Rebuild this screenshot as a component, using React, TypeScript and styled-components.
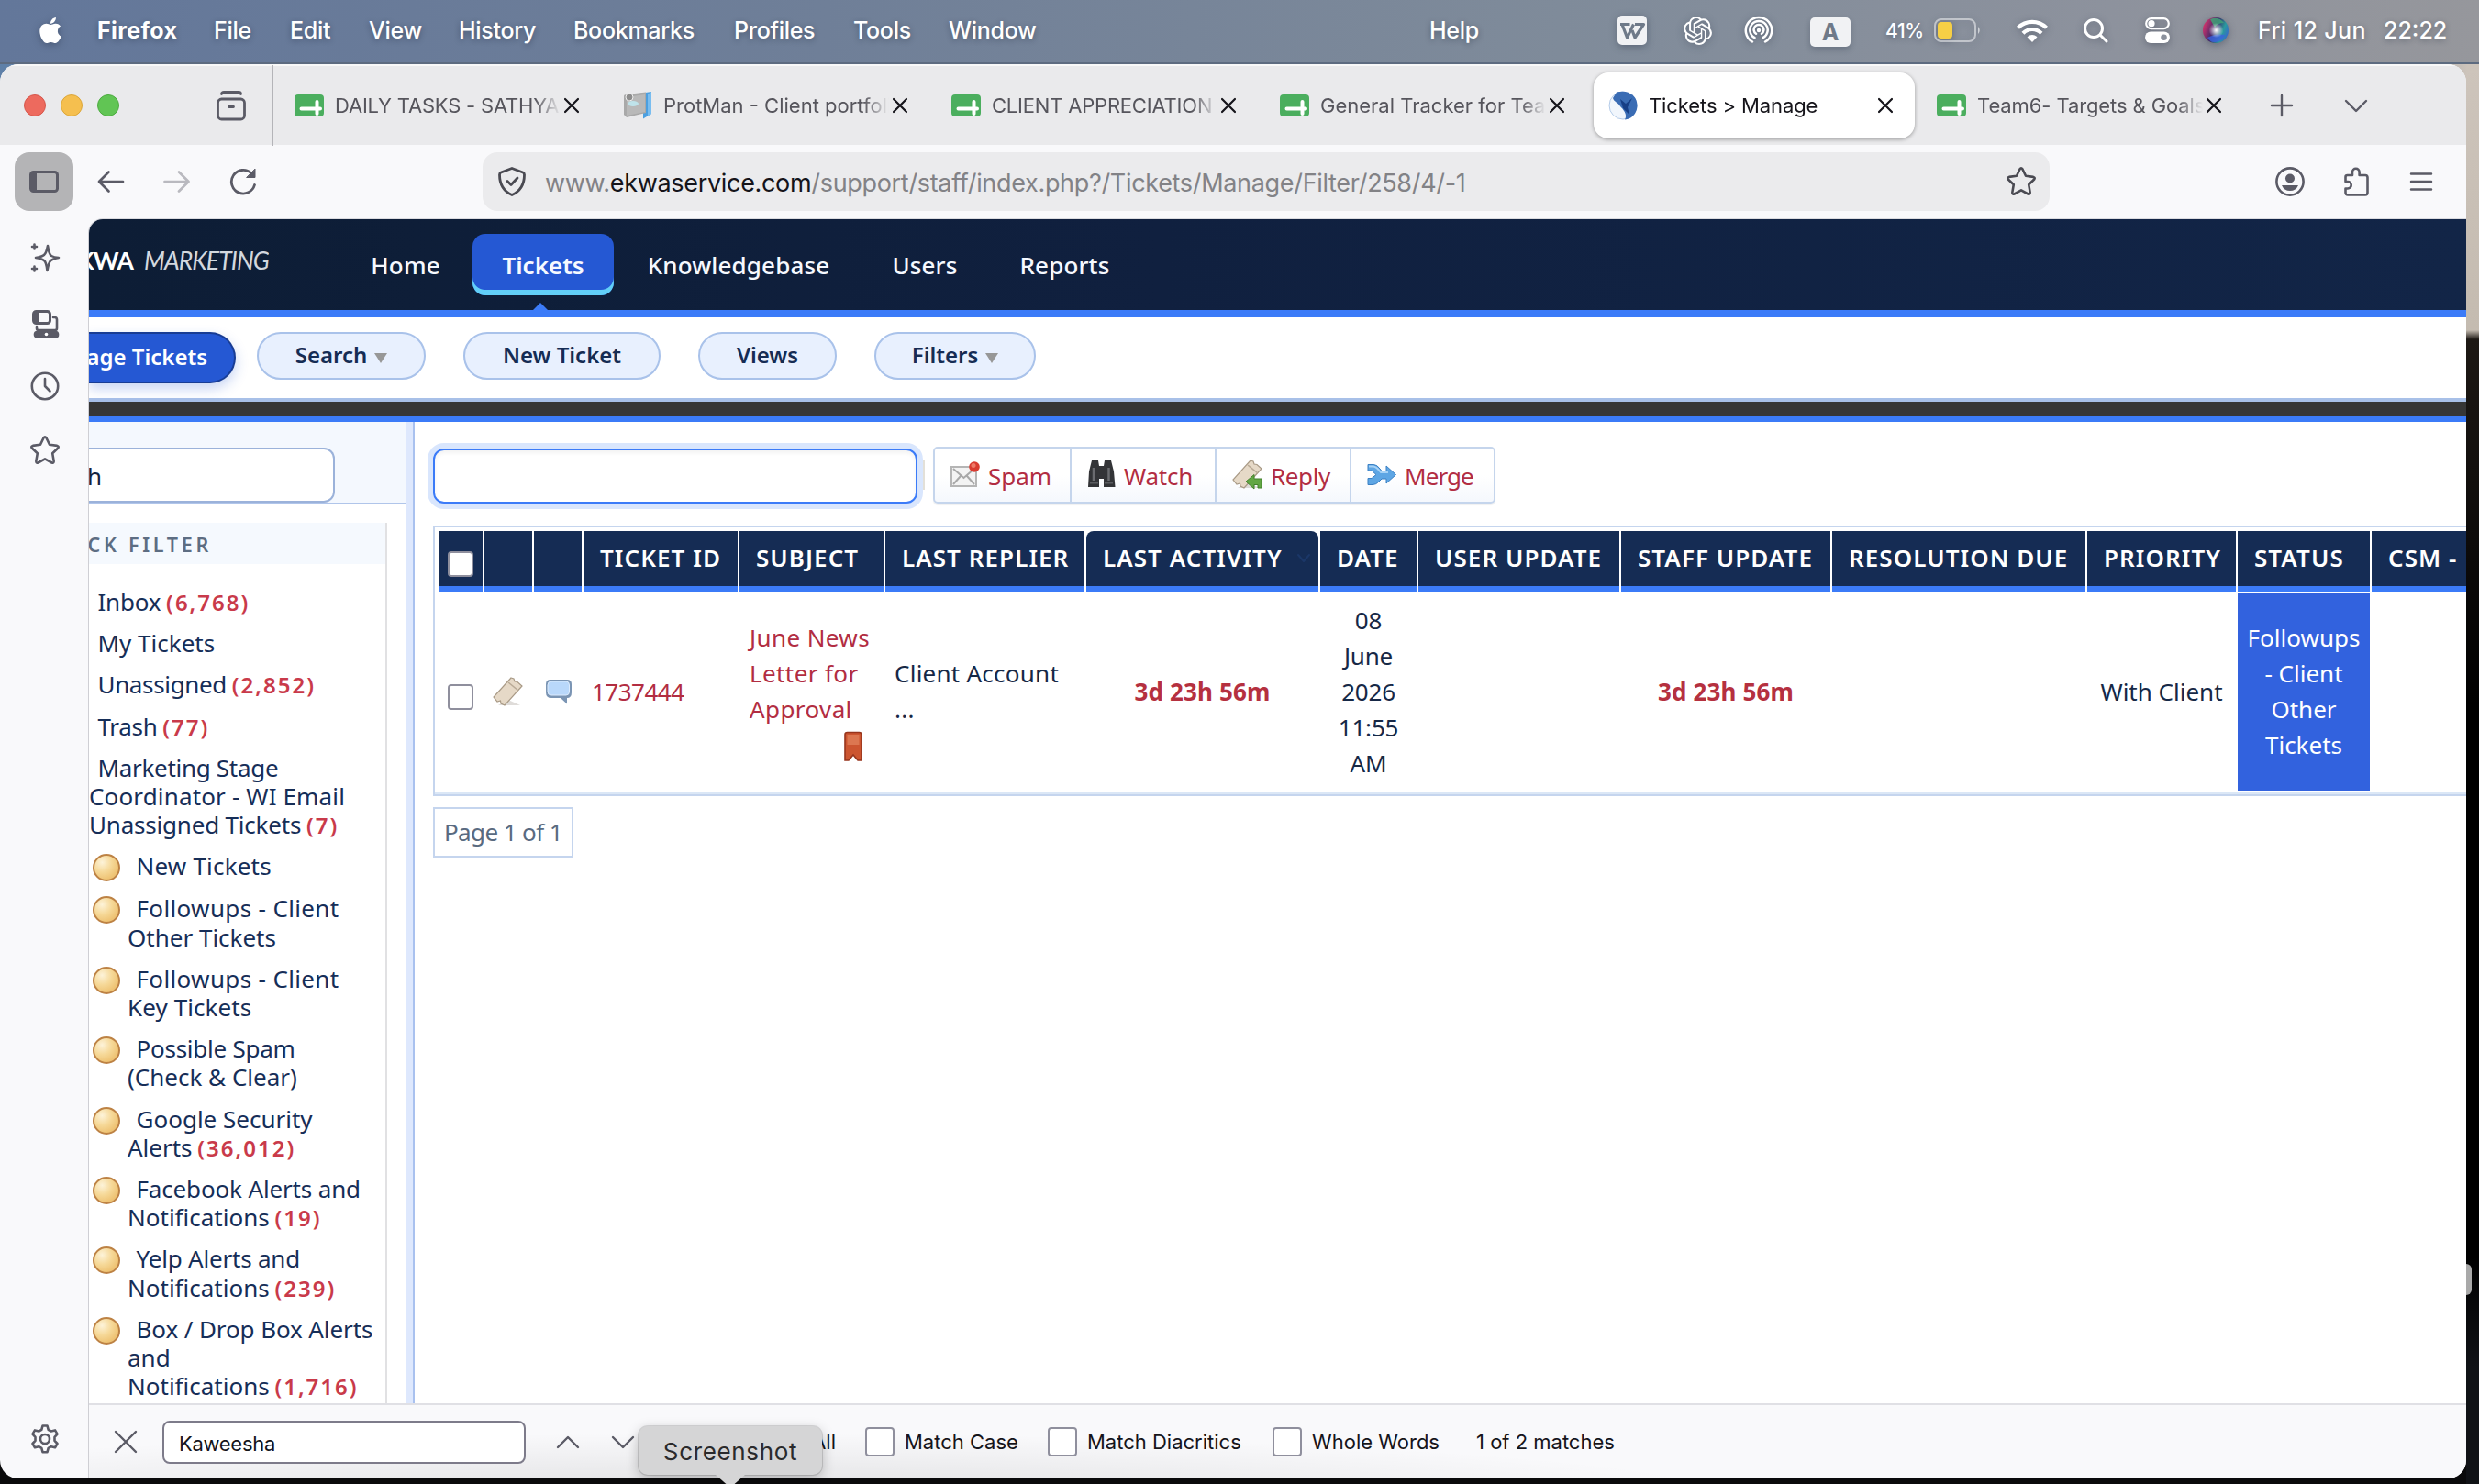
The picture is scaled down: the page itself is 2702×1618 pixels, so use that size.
import React from "react";
import styled, { createGlobalStyle, css } from "styled-components";
import { FaApple } from "react-icons/fa";
import { SiOpenai } from "react-icons/si";

const ui = `Inter, "Liberation Sans", sans-serif`;
const site = `"Noto Sans", "Open Sans", sans-serif`;

const Global = createGlobalStyle`
  *, *::before, *::after { box-sizing: border-box; }
  body { margin: 0; font-family: ${ui}; overflow: hidden; }
  svg { display: block; flex: none; overflow: visible; }
`;

/* ---------- desktop ---------- */

const Desktop = styled.div`
  position: relative;
  width: 2702px;
  height: 1618px;
  overflow: hidden;
  display: flex;
  flex-direction: column;
  background: linear-gradient(90deg, #5f80a8 0, #8e969f 2600px, #cdc4bb 2690px) 0 0 / 100% 120px no-repeat, #0a0a0b;
`;

const MenuBar = styled.header`
  height: 70px;
  flex: none;
  display: flex;
  align-items: flex-start;
  padding-left: 39px;
  background: linear-gradient(90deg, #63779a 0, #6f7f98 900px, #7f8b9a 1700px, #8d929d 2300px, #96979c 100%);
  border-bottom: 2px solid #5d6b80;
  color: #fff;
`;

const MenuItem = styled.div<{ $w: number; $bold?: boolean; $ls?: number; $size?: number }>`
  width: ${(p) => p.$w}px;
  height: 66px;
  flex: none;
  display: flex;
  align-items: center;
  white-space: nowrap;
  font-size: ${(p) => p.$size ?? 25}px;
  font-weight: ${(p) => (p.$bold ? 700 : 500)};
  letter-spacing: ${(p) => p.$ls ?? -0.3}px;
  text-shadow: 0 2px 6px rgba(20, 30, 50, 0.4);
  svg { filter: drop-shadow(0 2px 4px rgba(20, 30, 50, 0.35)); }
`;

const InputSource = styled.span<{ $w: number }>`
  width: ${(p) => p.$w}px;
  height: 32px;
  margin-top: 3px;
  border-radius: 5px;
  background: #f1f2f4;
  color: #6f7a89;
  display: flex;
  align-items: center;
  justify-content: center;
  font-weight: 700;
  font-size: 25px;
  text-shadow: none;
  box-shadow: 0 3px 6px rgba(20, 30, 50, 0.25);
`;

const Stage = styled.div`
  flex: 1;
  display: flex;
  min-height: 0;
`;

const Wallpaper = styled.div`
  width: 14px;
  display: flex;
  flex-direction: column;
  background: linear-gradient(#cdc4bb 0, #c4bbb0 290px, #1d1814 300px, #0d0b0a 520px, #000 700px, #000 1300px, #101216 1420px);
  padding-top: 1308px;
`;

const PeekingHandle = styled.div`
  width: 6px;
  height: 34px;
  background: #a9a9a9;
  border-radius: 0 6px 6px 0;
`;

/* ---------- browser chrome ---------- */

const Browser = styled.main`
  width: 2688px;
  height: 1542px;
  overflow: hidden;
  display: flex;
  flex-direction: column;
  border-radius: 20px;
  background: #f9f9fb;
`;

const TabStrip = styled.div`
  height: 88px;
  flex: none;
  display: flex;
  align-items: center;
  background: #eaeaec;
  border-top: 2px solid #f8f8f8;
`;

const Lights = styled.div`
  width: 236px;
  padding-left: 26px;
  display: flex;
  gap: 16px;
`;

const Light = styled.i<{ $c: string; $b: string }>`
  width: 24px;
  height: 24px;
  border-radius: 50%;
  background: ${(p) => p.$c};
  border: 1px solid ${(p) => p.$b};
`;

const TabDivider = styled.div`
  width: 2px;
  height: 88px;
  margin: 0 7px 0 28px;
  background: #b4b4b8;
`;

const Tab = styled.div<{ $active?: boolean }>`
  width: 350px;
  height: 72px;
  margin-right: 8px;
  padding-left: 16px;
  display: flex;
  align-items: center;
  gap: 12px;
  border-radius: 16px;
  color: ${(p) => (p.$active ? "#15141a" : "#56555c")};
  ${(p) =>
    p.$active &&
    css`
      background: #fff;
      box-shadow: 0 1px 4px rgba(0, 0, 0, 0.35);
    `}
`;

const TabTitle = styled.span<{ $ls?: number }>`
  width: 246px;
  margin-right: -8px;
  overflow: hidden;
  white-space: nowrap;
  font-size: 22px;
  line-height: 32px;
  letter-spacing: ${(p) => p.$ls ?? -0.1}px;
  mask-image: linear-gradient(90deg, #000 218px, transparent 246px);
`;

const TabEnd = styled.div`
  display: flex;
  align-items: center;
  gap: 57px;
  padding-left: 22px;
`;

const NavBar = styled.div`
  height: 80px;
  flex: none;
  display: flex;
  align-items: center;
  padding-left: 16px;
`;

const PanelToggle = styled.div`
  width: 64px;
  height: 64px;
  margin-right: 26px;
  border-radius: 16px;
  background: #b4b4b6;
  display: flex;
  align-items: center;
  justify-content: center;
`;

const NavIcon = styled.div<{ $w: number; $dim?: boolean }>`
  width: ${(p) => p.$w}px;
  opacity: ${(p) => (p.$dim ? 0.4 : 1)};
`;

const UrlBar = styled.div`
  width: 1708px;
  height: 64px;
  border-radius: 16px;
  background: #ebebed;
  display: flex;
  align-items: center;
  padding: 0 15px 0 16px;
`;

const Url = styled.span`
  flex: 1;
  padding: 2px 0 0 20px;
  font-size: 27px;
  letter-spacing: -0.32px;
  color: #828286;
  b { font-weight: 400; color: #15141a; }
`;

const NavEnd = styled.div`
  display: flex;
  align-items: center;
  gap: 42px;
  margin-left: 246px;
`;

const Main = styled.div`
  flex: 1;
  display: flex;
  min-height: 0;
`;

const Rail = styled.nav`
  width: 96px;
  flex: none;
  display: flex;
  flex-direction: column;
  align-items: center;
  padding: 27px 0 27px 1px;
`;

const RailIcon = styled.div<{ $h: number }>`
  height: ${(p) => p.$h}px;
`;

const RailSpacer = styled.div`
  flex: 1;
`;

const Frame = styled.div`
  flex: 1;
  min-width: 0;
  display: flex;
  flex-direction: column;
  overflow: hidden;
  border-left: 1px solid #cfcfd4;
  border-top: 1px solid #dcdce0;
  border-top-left-radius: 16px;
`;

/* ---------- site ---------- */

const Page = styled.div`
  height: 1291px;
  flex: none;
  overflow: hidden;
  background: #fff;
  font-family: ${site};
`;

const SiteHeader = styled.div`
  height: 107px;
  border-bottom: 8px solid #3b7bf8;
  background: linear-gradient(90deg, #0d1d35, #10203f 45%, #122547);
  display: flex;
  align-items: flex-start;
  padding-top: 16px;
`;

const Logo = styled.div`
  width: 196px;
  height: 58px;
  margin-right: 80px;
  overflow: hidden;
  display: flex;
  align-items: center;
  justify-content: flex-end;
  white-space: nowrap;
  color: #d3d8df;
  font: italic 400 26.5px Lato, sans-serif;
  letter-spacing: -0.9px;
  b {
    font-style: normal;
    font-weight: 700;
    margin-right: 12px;
    color: #fff;
  }
`;

const SiteTab = styled.div<{ $active?: boolean; $w: number; $ls?: number }>`
  position: relative;
  width: ${(p) => p.$w}px;
  height: 67px;
  margin-right: 4px;
  display: flex;
  align-items: center;
  justify-content: center;
  border-radius: 14px;
  color: #f6f9ff;
  font-size: 26px;
  font-weight: ${(p) => (p.$active ? 600 : 500)};
  letter-spacing: ${(p) => (p.$active ? 0 : 0.15)}px;
  ${(p) =>
    p.$active &&
    css`
      background: #2558d3;
      box-shadow: inset 0 -6px 0 #62cff8;
      &::after {
        content: "";
        position: absolute;
        left: 66px;
        top: 75px;
        border: 8px solid transparent;
        border-top: 0;
        border-bottom-color: #3b7bf8;
      }
    `}
`;

const SubNav = styled.div`
  height: 92px;
  padding-top: 16px;
  border-bottom: 4px solid #a8c0e8;
  display: flex;
  align-items: flex-start;
  gap: 41px;
`;

const Pill = styled.div<{ $w: number }>`
  width: ${(p) => p.$w}px;
  height: 52px;
  display: flex;
  align-items: center;
  justify-content: center;
  gap: 8px;
  padding-bottom: 3px;
  border: 2px solid #a9c2ea;
  border-radius: 26px;
  background: #e8f0fe;
  color: #152c54;
  font-size: 24px;
  font-weight: 600;
`;

const CurrentPill = styled(Pill)`
  height: 56px;
  margin-right: -18px;
  padding-right: 29px;
  justify-content: flex-end;
  border-color: #193d94;
  border-left: 0;
  border-radius: 0 28px 28px 0;
  background: #2558d3;
  color: #fff;
  white-space: nowrap;
  box-shadow: 0 6px 14px rgba(37, 88, 211, 0.25);
`;

const PillCaret = styled.i`
  margin-top: 7px;
  border: 7px solid transparent;
  border-top: 11px solid #979797;
  border-bottom: 0;
`;

const DarkBand = styled.div`
  height: 22px;
  background: #363636;
  border-bottom: 6px solid #3b7bf8;
`;

const Columns = styled.div`
  height: 1070px;
  display: flex;
`;

const LeftPane = styled.aside`
  width: 345px;
  flex: none;
`;

const SearchArea = styled.div`
  height: 90px;
  padding-top: 28px;
  background: #f4f8fe;
  border-bottom: 2px solid #b0c5ea;
`;

const SearchField = styled.div`
  width: 268px;
  height: 60px;
  border: 2px solid #9bb2da;
  border-left: 0;
  border-radius: 0 12px 12px 0;
  background: #fff;
  color: #14233f;
  font-size: 26px;
  line-height: 59px;
`;

const ClippedLabel = styled.span<{ $w: number }>`
  width: ${(p) => p.$w}px;
  overflow: hidden;
  display: flex;
  justify-content: flex-end;
  white-space: nowrap;
`;

const QuickFilter = styled.div`
  width: 325px;
  height: 980px;
  margin-top: 20px;
  border-right: 2px solid #e1e1e3;
`;

const QuickHead = styled.div`
  height: 45px;
  margin-bottom: 19px;
  background: #f5f9fe;
  color: #5d6d82;
  font-size: 21.5px;
  font-weight: 600;
  letter-spacing: 3.7px;
  line-height: 47px;
`;

const FilterItem = styled.div`
  padding: 7px 0;
  color: #162e58;
  font-size: 26px;
  line-height: 31.2px;
  white-space: nowrap;
`;

const FilterLine = styled.span<{ $ls: number }>`
  letter-spacing: ${(p) => p.$ls}px;
`;

const FilterText = styled.div`
  text-indent: 9.5px;
`;

const TicketType = styled(FilterItem)`
  display: flex;
  gap: 8px;
  padding-left: 4px;
`;

const Count = styled.b`
  margin-left: -1px;
  font-size: 24px;
  font-weight: 600;
  letter-spacing: 2px;
  color: #c93a4a;
`;

const Ball = styled.i`
  width: 30px;
  height: 30px;
  margin-top: 2px;
  flex: none;
  border-radius: 50%;
  border: 2px solid #bd8244;
  background: radial-gradient(circle at 32% 28%, #fdf3d9 0, #f6d999 40%, #eec272 75%, #f6dfae 100%);
`;

const Splitter = styled.div`
  width: 10px;
  flex: none;
  background: #dee8fd;
  border-right: 2px solid #a9c1ef;
`;

const RightPane = styled.section`
  flex: 1;
  min-width: 0;
  padding: 27px 0 0 20px;
  overflow: hidden;
`;

const Toolbar = styled.div`
  display: flex;
  align-items: center;
  height: 62px;
`;

const QueryBox = styled.div`
  width: 528px;
  height: 60px;
  margin-top: 2px;
  border: 2px solid #3b7bf8;
  border-radius: 12px;
  background: #fff;
  box-shadow: 0 0 0 6px #d9e6fd, inset 0 3px 4px rgba(0, 0, 0, 0.05);
`;

const Tick = styled.div`
  width: 2px;
  height: 32px;
  margin: 0 9px 0 6px;
  background: #e3e0d8;
`;

const ActionGroup = styled.div`
  height: 62px;
  display: flex;
  border: 2px solid #c5d5ec;
  border-radius: 5px;
  background: linear-gradient(#fff 50%, #f5f8fd);
  box-shadow: 0 2px 1px rgba(0, 0, 0, 0.06);
`;

const Action = styled.div<{ $w: number; $ls?: number }>`
  width: ${(p) => p.$w}px;
  display: flex;
  align-items: center;
  gap: 9px;
  padding: 2px 0 0 17px;
  color: #b22d42;
  font-size: 26px;
  letter-spacing: ${(p) => p.$ls ?? 0}px;
  & + & { border-left: 2px solid #c5d5ec; }
  svg { margin-top: -4px; }
`;

const TableFrame = styled.div`
  width: 2400px;
  height: 295px;
  margin-top: 24px;
  padding: 4px;
  border: 2px solid #c5d5ee;
  box-shadow: inset 0 -2px 0 #dbe7f6;
`;

const Row = styled.div`
  display: grid;
  grid-template-columns: 48px 52px 52px 168px 157px 217px 253px 105px 219px 228px 276px 162px 144px 300px;
  column-gap: 2px;
`;

const Th = styled.div<{ $round?: boolean }>`
  height: 66px;
  padding-left: 18px;
  background: #152c54;
  border-bottom: 6px solid #3b7bf8;
  border-radius: ${(p) => (p.$round ? "8px 8px 0 0" : "0")};
  color: #fff;
  font-size: 26px;
  font-weight: 600;
  letter-spacing: 1.05px;
  line-height: 59px;
  white-space: nowrap;
`;

const SortHeading = styled.span`
  display: flex;
  align-items: center;
  gap: 16px;
`;

const CheckTh = styled(Th)`
  padding: 22px 0 0 10px;
`;

const Box = styled.i<{ $s: number }>`
  display: block;
  flex: none;
  width: ${(p) => p.$s}px;
  height: ${(p) => p.$s}px;
  border: 2px solid #8f8f9d;
  border-radius: 4px;
  background: #fff;
`;

const Td = styled.div<{ $align?: "left" | "center"; $pad?: number; $color?: string; $bold?: boolean; $bg?: string; $ls?: number }>`
  height: 215px;
  margin-top: 2px;
  padding: 0 0 1px ${(p) => p.$pad ?? 0}px;
  display: flex;
  flex-direction: column;
  justify-content: center;
  align-items: ${(p) => (p.$align === "center" ? "center" : "flex-start")};
  background: ${(p) => p.$bg ?? "#fff"};
  color: ${(p) => p.$color ?? "#162846"};
  font-size: 26px;
  font-weight: ${(p) => (p.$bold ? 700 : 400)};
  letter-spacing: ${(p) => p.$ls ?? 0}px;
  line-height: 39px;
  white-space: nowrap;
`;

const CheckTd = styled(Td)`
  padding: 10px 0 0 10px;
`;

const FlagLine = styled.span`
  height: 39px;
  padding: 5px 0 0 103px;
`;

const Pager = styled.div`
  width: 153px;
  height: 55px;
  margin-top: 12px;
  border: 2px solid #c5d5ee;
  color: #596a80;
  font-size: 26px;
  letter-spacing: -0.6px;
  line-height: 51px;
  text-align: center;
`;

/* ---------- find bar ---------- */

const FindBar = styled.div`
  flex: 1;
  display: flex;
  align-items: center;
  border-top: 2px solid #e0e0e5;
  padding-left: 28px;
  font-size: 22px;
  color: #15141a;
  background: radial-gradient(ellipse 1100px 70px at 700px 100px, rgba(0, 0, 0, 0.1), transparent), #f9f9fb;
`;

const FindField = styled.div`
  width: 396px;
  height: 47px;
  margin: 0 34px 0 28px;
  padding-left: 16px;
  border: 2px solid #7d7b8a;
  border-radius: 8px;
  background: #fff;
  line-height: 46px;
  letter-spacing: -0.3px;
`;

const FindArrow = styled.div`
  width: 60px;
`;

const FindOption = styled.label<{ $w: number }>`
  width: ${(p) => p.$w}px;
  display: flex;
  align-items: center;
  gap: 11px;
  white-space: nowrap;
`;

const CoveredOption = styled(FindOption)`
  justify-content: flex-end;
  padding-right: 32px;
`;

const DockTooltip = styled.div`
  position: absolute;
  left: 696px;
  top: 1555px;
  width: 200px;
  height: 53px;
  border-radius: 10px;
  background: #d5d5d6;
  box-shadow: 0 0 0 1px rgba(0, 0, 0, 0.12), 0 4px 14px rgba(0, 0, 0, 0.25);
  color: #2a2a2c;
  font-size: 26px;
  letter-spacing: 0.65px;
  line-height: 55px;
  text-align: center;
  &::after {
    content: "";
    position: absolute;
    left: 84px;
    top: 53px;
    border: 16px solid transparent;
    border-top: 14px solid #d5d5d6;
    border-bottom: 0;
  }
`;

/* ---------- drawings ---------- */

type StrokeProps = { w?: number; h?: number; sw?: number; color?: string; box?: string; children: React.ReactNode };
const Stroke = ({ w = 32, h = w, sw = 2.6, color = "#5b5b66", box, children }: StrokeProps) => (
  <svg width={w} height={h} viewBox={box ?? `0 0 ${w} ${h}`} fill="none" stroke={color} strokeWidth={sw} strokeLinecap="round" strokeLinejoin="round">
    {children}
  </svg>
);

const CrossIcon = ({ s, color, sw }: { s: number; color: string; sw: number }) => (
  <Stroke w={s} sw={sw} color={color}>
    <path d={`M1 1L${s - 1} ${s - 1}M${s - 1} 1L1 ${s - 1}`} />
  </Stroke>
);

const StarIcon = ({ color = "#5b5b66" }: { color?: string }) => (
  <Stroke color={color}>
    <path d="M14.6 2.3q1.4-2.2 2.8 0l3.6 7.5 8.2 1.1q2.4.6 1 2.6l-6 5.8 1.5 8.6q.1 2.4-2.2 1.6L16 25.4l-7.500 4.100q-2.300.8-2.200-1.600l1.500-8.600-6-5.800q-1.400-2 1-2.600l8.200-1.100z" />
  </Stroke>
);

const SheetsIcon = () => (
  <svg width="32" height="24" viewBox="0 0 32 24">
    <rect width="32" height="24" rx="4" fill="#4bae5e" />
    <path d="M7.500 15.500H28M24.500 8v13" stroke="#fff" strokeWidth="4" strokeLinecap="round" />
  </svg>
);

const FolderIcon = () => (
  <svg width="32" height="32" viewBox="0 0 32 32">
    <path d="M18 3L31 1v24l-9 5.500V5z" fill="#4c9fdf" />
    <path d="M27 4l4-3v24l-4 3z" fill="#79bdf0" />
    <path d="M1 6q0-1.500 1.500-1.700L25 1.500V24L4 29l-3-3z" fill="#a9a9a9" />
    <path d="M4 7l20-3v19L4 27z" fill="#b9b9b9" />
    <circle cx="7" cy="7" r="4" fill="#8d8d8d" stroke="#eee" />
    <ellipse cx="11" cy="14" rx="6" ry="3" fill="#bfe3ea" />
  </svg>
);

const EkwaIcon = () => (
  <svg width="32" height="32" viewBox="0 0 32 32">
    <circle cx="16" cy="16" r="15" fill="#f1f6fc" stroke="#b4cbe8" />
    <path d="M9 1.500C22-2 32 6 31.500 17 31 25 25 31 18 31.500 21 26 17 21 13 17 10 12 6 12 5 8z" fill="#3a6cb4" />
    <path d="M13 9l6 5 7-6-5 10 2 8-7-7z" fill="#173f86" />
  </svg>
);

const AirdropIcon = () => (
  <Stroke w={32} sw={2.5} color="#fff">
    <path d="M9 28.500A14.200 14.200 0 1 1 23 28.500M11.500 24.200A9.700 9.700 0 1 1 20.500 24.200M13 19.800A5.400 5.400 0 1 1 19 19.800" />
    <circle cx="16" cy="16" r="2.200" fill="#fff" stroke="none" />
  </Stroke>
);

const WIcon = () => (
  <svg width="32" height="32" viewBox="0 0 32 32">
    <rect width="32" height="32" rx="5" fill="#f1f2f4" />
    <path d="M3 9.500h10.500M5 9.500l5.500 14.500 7-14.500M16 16l3 8L28.500 9.500H19" fill="none" stroke="#6f7a89" strokeWidth="3.200" strokeLinejoin="round" />
  </svg>
);

const BatteryIcon = () => (
  <svg width="52" height="26" viewBox="0 0 52 26">
    <rect x="1" y="1" width="44" height="24" rx="7" fill="none" stroke="#fff" strokeOpacity=".5" strokeWidth="2" />
    <rect x="4" y="4" width="16" height="18" rx="4" fill="#f6cf45" />
    <path d="M48 9q3.500 4 0 8z" fill="#fff" fillOpacity=".6" />
  </svg>
);

const WifiIcon = () => (
  <svg width="34" height="25" viewBox="0 0 34 25" fill="none" stroke="#fff" strokeWidth="4.200">
    <path d="M1.500 9.200a22 22 0 0 1 31 0M7 15.200a14 14 0 0 1 20 0" />
    <path d="M11.500 19.200q5.500-4.400 11 0L17 25z" fill="#fff" stroke="none" />
  </svg>
);

const ControlIcon = () => (
  <svg width="27" height="28" viewBox="0 0 27 28">
    <rect x="1.200" y="1.200" width="24.600" height="11" rx="5.500" fill="none" stroke="#fff" strokeWidth="2.200" />
    <circle cx="7" cy="6.700" r="3.600" fill="#fff" />
    <rect y="15.500" width="27" height="12.500" rx="6.200" fill="#fff" />
    <circle cx="20.500" cy="21.700" r="3.300" fill="#8b919d" />
  </svg>
);

const SiriIcon = () => (
  <svg width="28" height="28" viewBox="0 0 28 28">
    <defs>
      <linearGradient id="siri" x1="0" y1=".3" x2="1" y2=".7">
        <stop offset="0" stopColor="#d8336b" />
        <stop offset=".45" stopColor="#3b2a6a" />
        <stop offset=".75" stopColor="#2a9a9c" />
        <stop offset="1" stopColor="#3565cf" />
      </linearGradient>
      <radialGradient id="glow">
        <stop offset="0" stopColor="#fff" />
        <stop offset="1" stopColor="#fff" stopOpacity="0" />
      </radialGradient>
    </defs>
    <circle cx="14" cy="14" r="14" fill="url(#siri)" />
    <path d="M8 2q9-4 15 4-7 0-10 5z" fill="#3fa878" opacity=".8" />
    <path d="M5 22q9-5 19-3-4 9-12 8-4 0-7-5z" fill="#3b62e0" opacity=".8" />
    <circle cx="14.500" cy="14" r="8" fill="url(#glow)" />
  </svg>
);

const MailIcon = () => (
  <svg width="32" height="32" viewBox="0 0 32 32">
    <rect x="1" y="8" width="27" height="21" fill="#f3f3f3" stroke="#b5b5b5" strokeWidth="2" />
    <path d="M3 10l11.500 10L26 10M3 27l8-9M26 27l-8-9" fill="none" stroke="#a8a8a8" strokeWidth="2" />
    <circle cx="26" cy="8" r="5.800" fill="#d93b30" />
    <circle cx="25" cy="6.500" r="2.500" fill="#ee7a68" />
  </svg>
);

const BinocularsIcon = () => (
  <svg width="31" height="32" viewBox="0 0 31 32">
    <path d="M5 1h7l1 6h5l1-6h7l3 12 1.500 17H18V21h-5v9H1L2 13z" fill="#333437" />
    <path d="M7 9v14M23.500 9v14" stroke="#6a6b6f" strokeWidth="2.500" />
    <path d="M3 25.500h9M19 25.500h9" stroke="#5b5c60" strokeWidth="2" />
  </svg>
);

const TicketShape = () => (
  <>
    <path d="M6 31h24L17 25z" fill="#c9c5bf" opacity=".6" />
    <path d="M20 1l3 1 1 3 3 .5 5 4.500L13 31l-4-2-.5-3-3.500 1-4-5z" fill="#e6d9c7" stroke="#a99a86" strokeWidth="1.200" />
    <path d="M17 6l11 9" stroke="#b9aa96" strokeWidth="1.600" />
  </>
);

const TicketIcon = () => (
  <svg width="33" height="32" viewBox="0 0 33 32">
    <TicketShape />
  </svg>
);

const ReplyIcon = () => (
  <svg width="33" height="32" viewBox="0 0 33 32">
    <TicketShape />
    <path d="M15 24l9-7.500V21h8v10h-4v-3.500h-4V32z" fill="#62a744" stroke="#43812c" />
  </svg>
);

const MergeIcon = () => (
  <svg width="32" height="32" viewBox="0 0 32 32">
    <path d="M1 5.500h6q4 0 7 4.500l2 2.500h5V7l10.500 9.500L21 26v-5h-5l-3 3q-3 3.500-7 3.500H1v-7h4l5-4-5-4.500H1z" fill="#5ea6e4" stroke="#3b80c4" />
    <path d="M2 7.500h5q3 0 8 6.500h8" stroke="#a6d2f6" strokeWidth="2" fill="none" />
  </svg>
);

const BubbleIcon = () => (
  <svg width="30" height="28" viewBox="0 0 30 28">
    <path d="M6 1h18q5 0 5 5v9q0 6-5 6v6.500L17 21H7q-6 0-6-6V6q0-5 5-5z" fill="#7b95b4" />
    <path d="M7 3h16q3.500 0 3.500 4v7q0 4-3.500 4H7q-4 0-4-4V7q0-4 4-4z" fill="#b9d8fb" stroke="#dcebfd" />
  </svg>
);

const BookmarkFlag = () => (
  <svg width="20" height="32" viewBox="0 0 20 32">
    <path d="M1 3q0-2.500 2.500-2.500h13Q19 .5 19 3v28h-4l-5-6-5 6H1z" fill="#cc5530" stroke="#97351d" strokeWidth="1.600" />
    <path d="M3.500 3h13v11h-13z" fill="#e28660" opacity=".7" />
  </svg>
);

/* ---------- data ---------- */

const menus: [string, number][] = [
  ["File", 83], ["Edit", 86], ["View", 98], ["History", 125], ["Bookmarks", 175], ["Profiles", 130], ["Tools", 104], ["Window", 524], ["Help", 205],
];

const tabs: { title: string; icon: React.ReactNode; active?: boolean; ls?: number }[] = [
  { title: "DAILY TASKS - SATHYA", icon: <SheetsIcon />, ls: -0.2 },
  { title: "ProtMan - Client portfolio", icon: <FolderIcon />, ls: 0 },
  { title: "CLIENT APPRECIATION", icon: <SheetsIcon />, ls: -0.2 },
  { title: "General Tracker for Team", icon: <SheetsIcon />, ls: 0 },
  { title: "Tickets > Manage", icon: <EkwaIcon />, active: true },
  { title: "Team6- Targets & Goals", icon: <SheetsIcon /> },
];

type Line = [text: string, ls?: number];

const folders: { lines: Line[]; count?: string }[] = [
  { lines: [["Inbox", -0.2]], count: "(6,768)" },
  { lines: [["My Tickets"]] },
  { lines: [["Unassigned", -0.35]], count: "(2,852)" },
  { lines: [["Trash", -0.3]], count: "(77)" },
  { lines: [["Marketing Stage", -0.3], ["Coordinator - WI Email", 0.15], ["Unassigned Tickets", -0.2]], count: "(7)" },
];

const types: { lines: Line[]; count?: string }[] = [
  { lines: [["New Tickets", 0.2]] },
  { lines: [["Followups - Client", 0.35], ["Other Tickets"]] },
  { lines: [["Followups - Client", 0.35], ["Key Tickets", 0.1]] },
  { lines: [["Possible Spam", -0.25], ["(Check & Clear)"]] },
  { lines: [["Google Security"], ["Alerts"]], count: "(36,012)" },
  { lines: [["Facebook Alerts and", -0.15], ["Notifications"]], count: "(19)" },
  { lines: [["Yelp Alerts and", -0.2], ["Notifications"]], count: "(239)" },
  { lines: [["Box / Drop Box Alerts", -0.1], ["and"], ["Notifications"]], count: "(1,716)" },
];

const Lines = ({ lines, count }: { lines: Line[]; count?: string }) => (
  <FilterText>
    {lines.map(([text, ls], i) => (
      <React.Fragment key={text}>
        {i > 0 && <br />}
        <FilterLine $ls={ls ?? 0}>{text}</FilterLine>
      </React.Fragment>
    ))}
    {count && <> <Count>{count}</Count></>}
  </FilterText>
);

export default function App() {
  return (
    <Desktop>
      <Global />
      <MenuBar>
        <MenuItem $w={67}><FaApple size={32} /></MenuItem>
        <MenuItem $w={127} $bold $ls={0.4}>Firefox</MenuItem>
        {menus.map(([label, w]) => <MenuItem key={label} $w={w}>{label}</MenuItem>)}
        <MenuItem $w={72}><WIcon /></MenuItem>
        <MenuItem $w={66}><SiOpenai size={31} /></MenuItem>
        <MenuItem $w={72}><AirdropIcon /></MenuItem>
        <MenuItem $w={82}><InputSource $w={44}>A</InputSource></MenuItem>
        <MenuItem $w={53} $size={21}>41%</MenuItem>
        <MenuItem $w={90}><BatteryIcon /></MenuItem>
        <MenuItem $w={73}><WifiIcon /></MenuItem>
        <MenuItem $w={67}>
          <Stroke w={26} sw={3} color="#fff"><circle cx="11" cy="11" r="9.500" /><path d="M18 18l7 7" /></Stroke>
        </MenuItem>
        <MenuItem $w={63}><ControlIcon /></MenuItem>
        <MenuItem $w={60}><SiriIcon /></MenuItem>
        <MenuItem $w={137} $ls={0.4}>Fri 12 Jun</MenuItem>
        <MenuItem $w={90} $ls={0}>22:22</MenuItem>
      </MenuBar>
      <Stage>
        <Browser>
          <TabStrip>
            <Lights>
              <Light $c="#ed6a5e" $b="#d5564b" />
              <Light $c="#f5bf4f" $b="#dba63a" />
              <Light $c="#61c554" $b="#4dab40" />
            </Lights>
            <Stroke w={32} sw={2.800}>
              <rect x="1.500" y="9" width="29" height="22" rx="4" />
              <path d="M5.500 3.500q0-2 2.500-2h16q2.500 0 2.500 2M13.500 17.500h5" />
            </Stroke>
            <TabDivider />
            {tabs.map((t) => (
              <Tab key={t.title} $active={t.active}>
                {t.icon}
                <TabTitle $ls={t.ls}>{t.title}</TabTitle>
                <CrossIcon s={16} sw={2.200} color="#15141a" />
              </Tab>
            ))}
            <TabEnd>
              <Stroke w={24} sw={2.400}><path d="M12 1v22M1 12h22" /></Stroke>
              <Stroke w={24} h={13} sw={2.400}><path d="M1 1l11 11L23 1" /></Stroke>
            </TabEnd>
          </TabStrip>
          <NavBar>
            <PanelToggle>
              <Stroke w={32} h={24} sw={3}>
                <rect x="1.500" y="1.500" width="29" height="21" rx="3" />
                <path d="M5 3v18" strokeWidth="6" strokeLinecap="butt" />
              </Stroke>
            </PanelToggle>
            <NavIcon $w={72}><Stroke w={30} h={24} sw={2.700}><path d="M28 12H2M12.500 1.500L2 12 12.500 22.500" /></Stroke></NavIcon>
            <NavIcon $w={72} $dim><Stroke w={30} h={24} sw={2.700}><path d="M1.500 12H27M17 1.500L27.500 12 17 22.500" /></Stroke></NavIcon>
            <NavIcon $w={276}>
              <Stroke w={30} sw={2.800}>
                <path d="M27.500 18.500A12.800 12.800 0 1 1 24 6" />
                <path d="M28 1.500v9h-9z" fill="#5b5b66" strokeWidth="1" />
              </Stroke>
            </NavIcon>
            <UrlBar>
              <Stroke w={32} color="#4a4a52" sw={2.800}>
                <path d="M16 1.500L28 6q1.500.6 1.500 2.500C29.500 19 25 26.500 16 30.500 7 26.500 2.500 19 2.500 8.500 2.500 6.600 4 6 4 6z" />
                <path d="M11 15.500l4 4 7-7.500" />
              </Stroke>
              <Url>www.<b>ekwaservice.com</b>/support/staff/index.php?/Tickets/Manage/Filter/258/4/-1</Url>
              <StarIcon color="#4a4a52" />
            </UrlBar>
            <NavEnd>
              <Stroke w={32}>
                <circle cx="16" cy="16" r="14.600" />
                <circle cx="16" cy="12.500" r="5" fill="#5b5b66" stroke="none" />
                <path d="M7 20h18q-2.500 6-9 6t-9-6z" fill="#5b5b66" stroke="none" />
              </Stroke>
              <Stroke w={30} h={32}>
                <path d="M2.500 16V11q0-2 2-2H10V5.500a3.800 3.800 0 0 1 7.600 0V9H24q2.500 0 2.500 2.500V28q0 2.500-2.500 2.500H5q-2.500 0-2.500-2.500v-4.500h2.500a3.750 3.750 0 0 0 0-7.500z" />
              </Stroke>
              <Stroke w={24} h={20} sw={2.500}><path d="M2 1.500h22M2 10h22M2 18.500h22" /></Stroke>
            </NavEnd>
          </NavBar>
          <Main>
            <Rail>
              <RailIcon $h={73}>
                <Stroke w={32}>
                  <path d="M19 3q1.500 9.500 4 11t8 2q-6 1-8.500 3T18.500 30q-1-9-3.500-11T6 16q6.500-1 9-3t4-10zM4.500 1.500v5M2 4h5M4.500 25.500v5M2 28h5" />
                </Stroke>
              </RailIcon>
              <RailIcon $h={67}>
                <Stroke w={32}>
                  <rect x="3.500" y="1.500" width="18" height="13" rx="3" strokeWidth="3" />
                  <path d="M7 2v12" strokeWidth="5" strokeLinecap="butt" />
                  <path d="M25 8h1.500q2.500 0 2.500 2.500V20q0 2-2 2H9q-2 0-2-2v-2" />
                  <rect x="5" y="24" width="25" height="5.500" rx="2.500" fill="#5b5b66" />
                  <circle cx="17.500" cy="26.500" r="1.800" fill="#fff" stroke="none" />
                </Stroke>
              </RailIcon>
              <RailIcon $h={70}>
                <Stroke w={32}><circle cx="16" cy="16" r="14.200" /><path d="M16 8v8l5.500 5.500" /></Stroke>
              </RailIcon>
              <RailIcon $h={32}><StarIcon /></RailIcon>
              <RailSpacer />
              <Stroke w={32}>
                <circle cx="16" cy="16" r="5" />
                <path d="M13.500 1.500h5l1.200 4.300 3 1.700 4.300-1.100 2.500 4.300-3 3.200v3.900l3 3.200-2.500 4.300-4.300-1.100-3 1.700-1.200 4.300h-5l-1.200-4.300-3-1.700-4.300 1.100-2.500-4.300 3-3.200v-3.900l-3-3.200L5 6.400l4.300 1.100 3-1.700z" />
              </Stroke>
            </Rail>
            <Frame>
              <Page>
                <SiteHeader>
                  <Logo><b>EKWA</b>MARKETING</Logo>
                  <SiteTab $w={138}>Home</SiteTab>
                  <SiteTab $w={154} $active>Tickets</SiteTab>
                  <SiteTab $w={264}>Knowledgebase</SiteTab>
                  <SiteTab $w={134}>Users</SiteTab>
                  <SiteTab $w={163}>Reports</SiteTab>
                </SiteHeader>
                <SubNav>
                  <CurrentPill $w={160}>Manage Tickets</CurrentPill>
                  <Pill $w={184}>Search<PillCaret /></Pill>
                  <Pill $w={215}>New Ticket</Pill>
                  <Pill $w={151}>Views</Pill>
                  <Pill $w={176}>Filters<PillCaret /></Pill>
                </SubNav>
                <DarkBand />
                <Columns>
                  <LeftPane>
                    <SearchArea>
                      <SearchField><ClippedLabel $w={14}>Search</ClippedLabel></SearchField>
                    </SearchArea>
                    <QuickFilter>
                      <QuickHead><ClippedLabel $w={134}>QUICK FILTER</ClippedLabel></QuickHead>
                      {folders.map((f, i) => (
                        <FilterItem key={i}><Lines {...f} /></FilterItem>
                      ))}
                      {types.map((t, i) => (
                        <TicketType key={i}><Ball /><Lines {...t} /></TicketType>
                      ))}
                    </QuickFilter>
                  </LeftPane>
                  <Splitter />
                  <RightPane>
                    <Toolbar>
                      <QueryBox />
                      <Tick />
                      <ActionGroup>
                        <Action $w={147}><MailIcon />Spam</Action>
                        <Action $w={158} $ls={-0.2}><BinocularsIcon />Watch</Action>
                        <Action $w={147} $ls={-0.4}><ReplyIcon />Reply</Action>
                        <Action $w={157} $ls={-0.9}><MergeIcon />Merge</Action>
                      </ActionGroup>
                    </Toolbar>
                    <TableFrame>
                      <Row>
                        <CheckTh><Box $s={28} /></CheckTh>
                        <Th /><Th />
                        <Th>TICKET ID</Th>
                        <Th>SUBJECT</Th>
                        <Th>LAST REPLIER</Th>
                        <Th $round>
                          <SortHeading>
                            LAST ACTIVITY
                            <Stroke w={14} h={9} sw={2} color="#1b3768"><path d="M1 1l6 7 6-7" /></Stroke>
                          </SortHeading>
                        </Th>
                        <Th>DATE</Th>
                        <Th>USER UPDATE</Th>
                        <Th>STAFF UPDATE</Th>
                        <Th>RESOLUTION DUE</Th>
                        <Th>PRIORITY</Th>
                        <Th>STATUS</Th>
                        <Th>CSM -</Th>
                      </Row>
                      <Row>
                        <CheckTd><Box $s={28} /></CheckTd>
                        <Td $pad={9}><TicketIcon /></Td>
                        <Td $pad={12}><BubbleIcon /></Td>
                        <Td $pad={9} $color="#b22d42" $ls={-0.5}>1737444</Td>
                        <Td $pad={11} $color="#b22d42" $ls={0.4}>
                          <span>June News</span>
                          <span>Letter for</span>
                          <span>Approval</span>
                          <FlagLine><BookmarkFlag /></FlagLine>
                        </Td>
                        <Td $pad={10} $ls={0.25}><span>Client Account</span><span>...</span></Td>
                        <Td $align="center" $color="#b5303f" $bold $ls={0.15}>3d 23h 56m</Td>
                        <Td $align="center" $ls={-0.2}>
                          <span>08</span><span>June</span><span>2026</span><span>11:55</span><span>AM</span>
                        </Td>
                        <Td />
                        <Td $align="center" $color="#b5303f" $bold $ls={0.15}>3d 23h 56m</Td>
                        <Td />
                        <Td $align="center">With Client</Td>
                        <Td $align="center" $color="#fff" $bg="#3262de">
                          <span>Followups</span><span>- Client</span><span>Other</span><span>Tickets</span>
                        </Td>
                        <Td />
                      </Row>
                    </TableFrame>
                    <Pager>Page 1 of 1</Pager>
                  </RightPane>
                </Columns>
              </Page>
              <FindBar>
                <CrossIcon s={24} sw={2.400} color="#5b5b66" />
                <FindField>Kaweesha</FindField>
                <FindArrow><Stroke w={24} h={13} sw={2.400}><path d="M1 12L12 1l11 11" /></Stroke></FindArrow>
                <FindArrow><Stroke w={24} h={13} sw={2.400}><path d="M1 1l11 11L23 1" /></Stroke></FindArrow>
                <CoveredOption $w={216}><Box $s={32} />Highlight All</CoveredOption>
                <FindOption $w={199}><Box $s={32} />Match Case</FindOption>
                <FindOption $w={245}><Box $s={32} />Match Diacritics</FindOption>
                <FindOption $w={222}><Box $s={32} />Whole Words</FindOption>
                <span>1 of 2 matches</span>
              </FindBar>
            </Frame>
          </Main>
        </Browser>
        <Wallpaper><PeekingHandle /></Wallpaper>
      </Stage>
      <DockTooltip>Screenshot</DockTooltip>
    </Desktop>
  );
}
